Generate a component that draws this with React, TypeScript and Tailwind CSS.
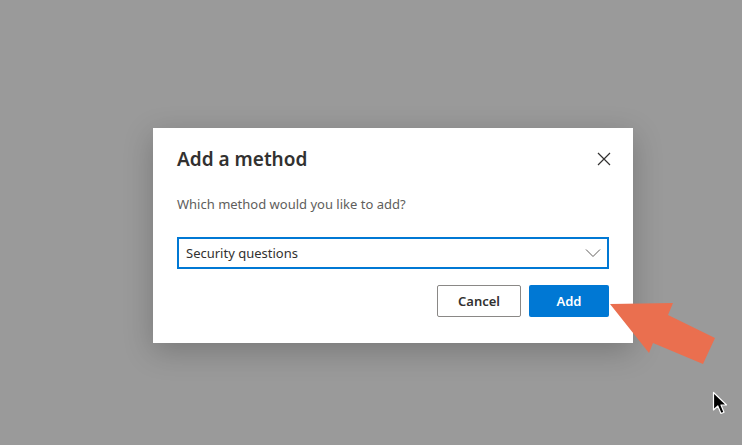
export default function App() {
  return (
    <div
      className="relative w-[742px] h-[445px] overflow-hidden bg-[#9a9a9a]"
      style={{ fontFamily: '"Noto Sans", "Open Sans", sans-serif' }}
    >
      <div className="pt-[128px] pl-[153px]">
        <div className="w-[480px] h-[215px] bg-white shadow-[0_8px_28px_rgba(0,0,0,0.22)] px-6 pt-[18px]">
          <div className="flex items-center justify-between">
            <h2 className="text-[19px] font-semibold text-[#323130] leading-[26px]">Add a method</h2>
            <button className="text-[#323130] -mr-[2px]">
              <svg width="14" height="14" viewBox="0 0 14 14">
                <path d="M1 1 L13 13 M13 1 L1 13" stroke="#323130" strokeWidth="1.2" />
              </svg>
            </button>
          </div>
          <p className="mt-[23px] text-[13px] text-[#605e5c] leading-[18px]">
            Which method would you like to add?
          </p>
          <div className="mt-[24px] h-[32px] border-2 border-[#0078d4] flex items-center justify-between pl-[7px] pr-[6px] pt-[2px]">
            <span className="text-[13px] text-[#323130]">Security questions</span>
            <svg width="16" height="10" viewBox="0 0 16 10" className="-mt-[2px]">
              <path d="M1 1.5 L8 8.5 L15 1.5" fill="none" stroke="#605e5c" strokeWidth="1" />
            </svg>
          </div>
          <div className="mt-4 flex justify-end gap-2">
            <button className="w-[84px] h-[32px] border border-[#8a8886] rounded-[2px] text-[13px] font-semibold text-[#323130] bg-white pt-[2px]">
              Cancel
            </button>
            <button className="w-[80px] h-[32px] rounded-[2px] text-[13px] font-semibold text-white bg-[#0078d4] pt-[2px]">
              Add
            </button>
          </div>
        </div>
      </div>

      <svg className="absolute left-[600px] top-[290px]" width="142" height="100" viewBox="0 0 142 100">
        <polygon
          points="10,14 73,13 68,25 115,48 103,74 53,53 49,63"
          fill="#ea6f4f"
        />
      </svg>

      <svg className="absolute left-[712px] top-[391px]" width="18" height="26" viewBox="0 0 18 26">
        <path
          d="M1.5 1.5 L1.5 19 L5.8 15 L9 22.5 L12 21.2 L9 14 L14.5 14 Z"
          fill="#000"
          stroke="#fff"
          strokeWidth="1.2"
          strokeLinejoin="round"
        />
      </svg>
    </div>
  )
}
